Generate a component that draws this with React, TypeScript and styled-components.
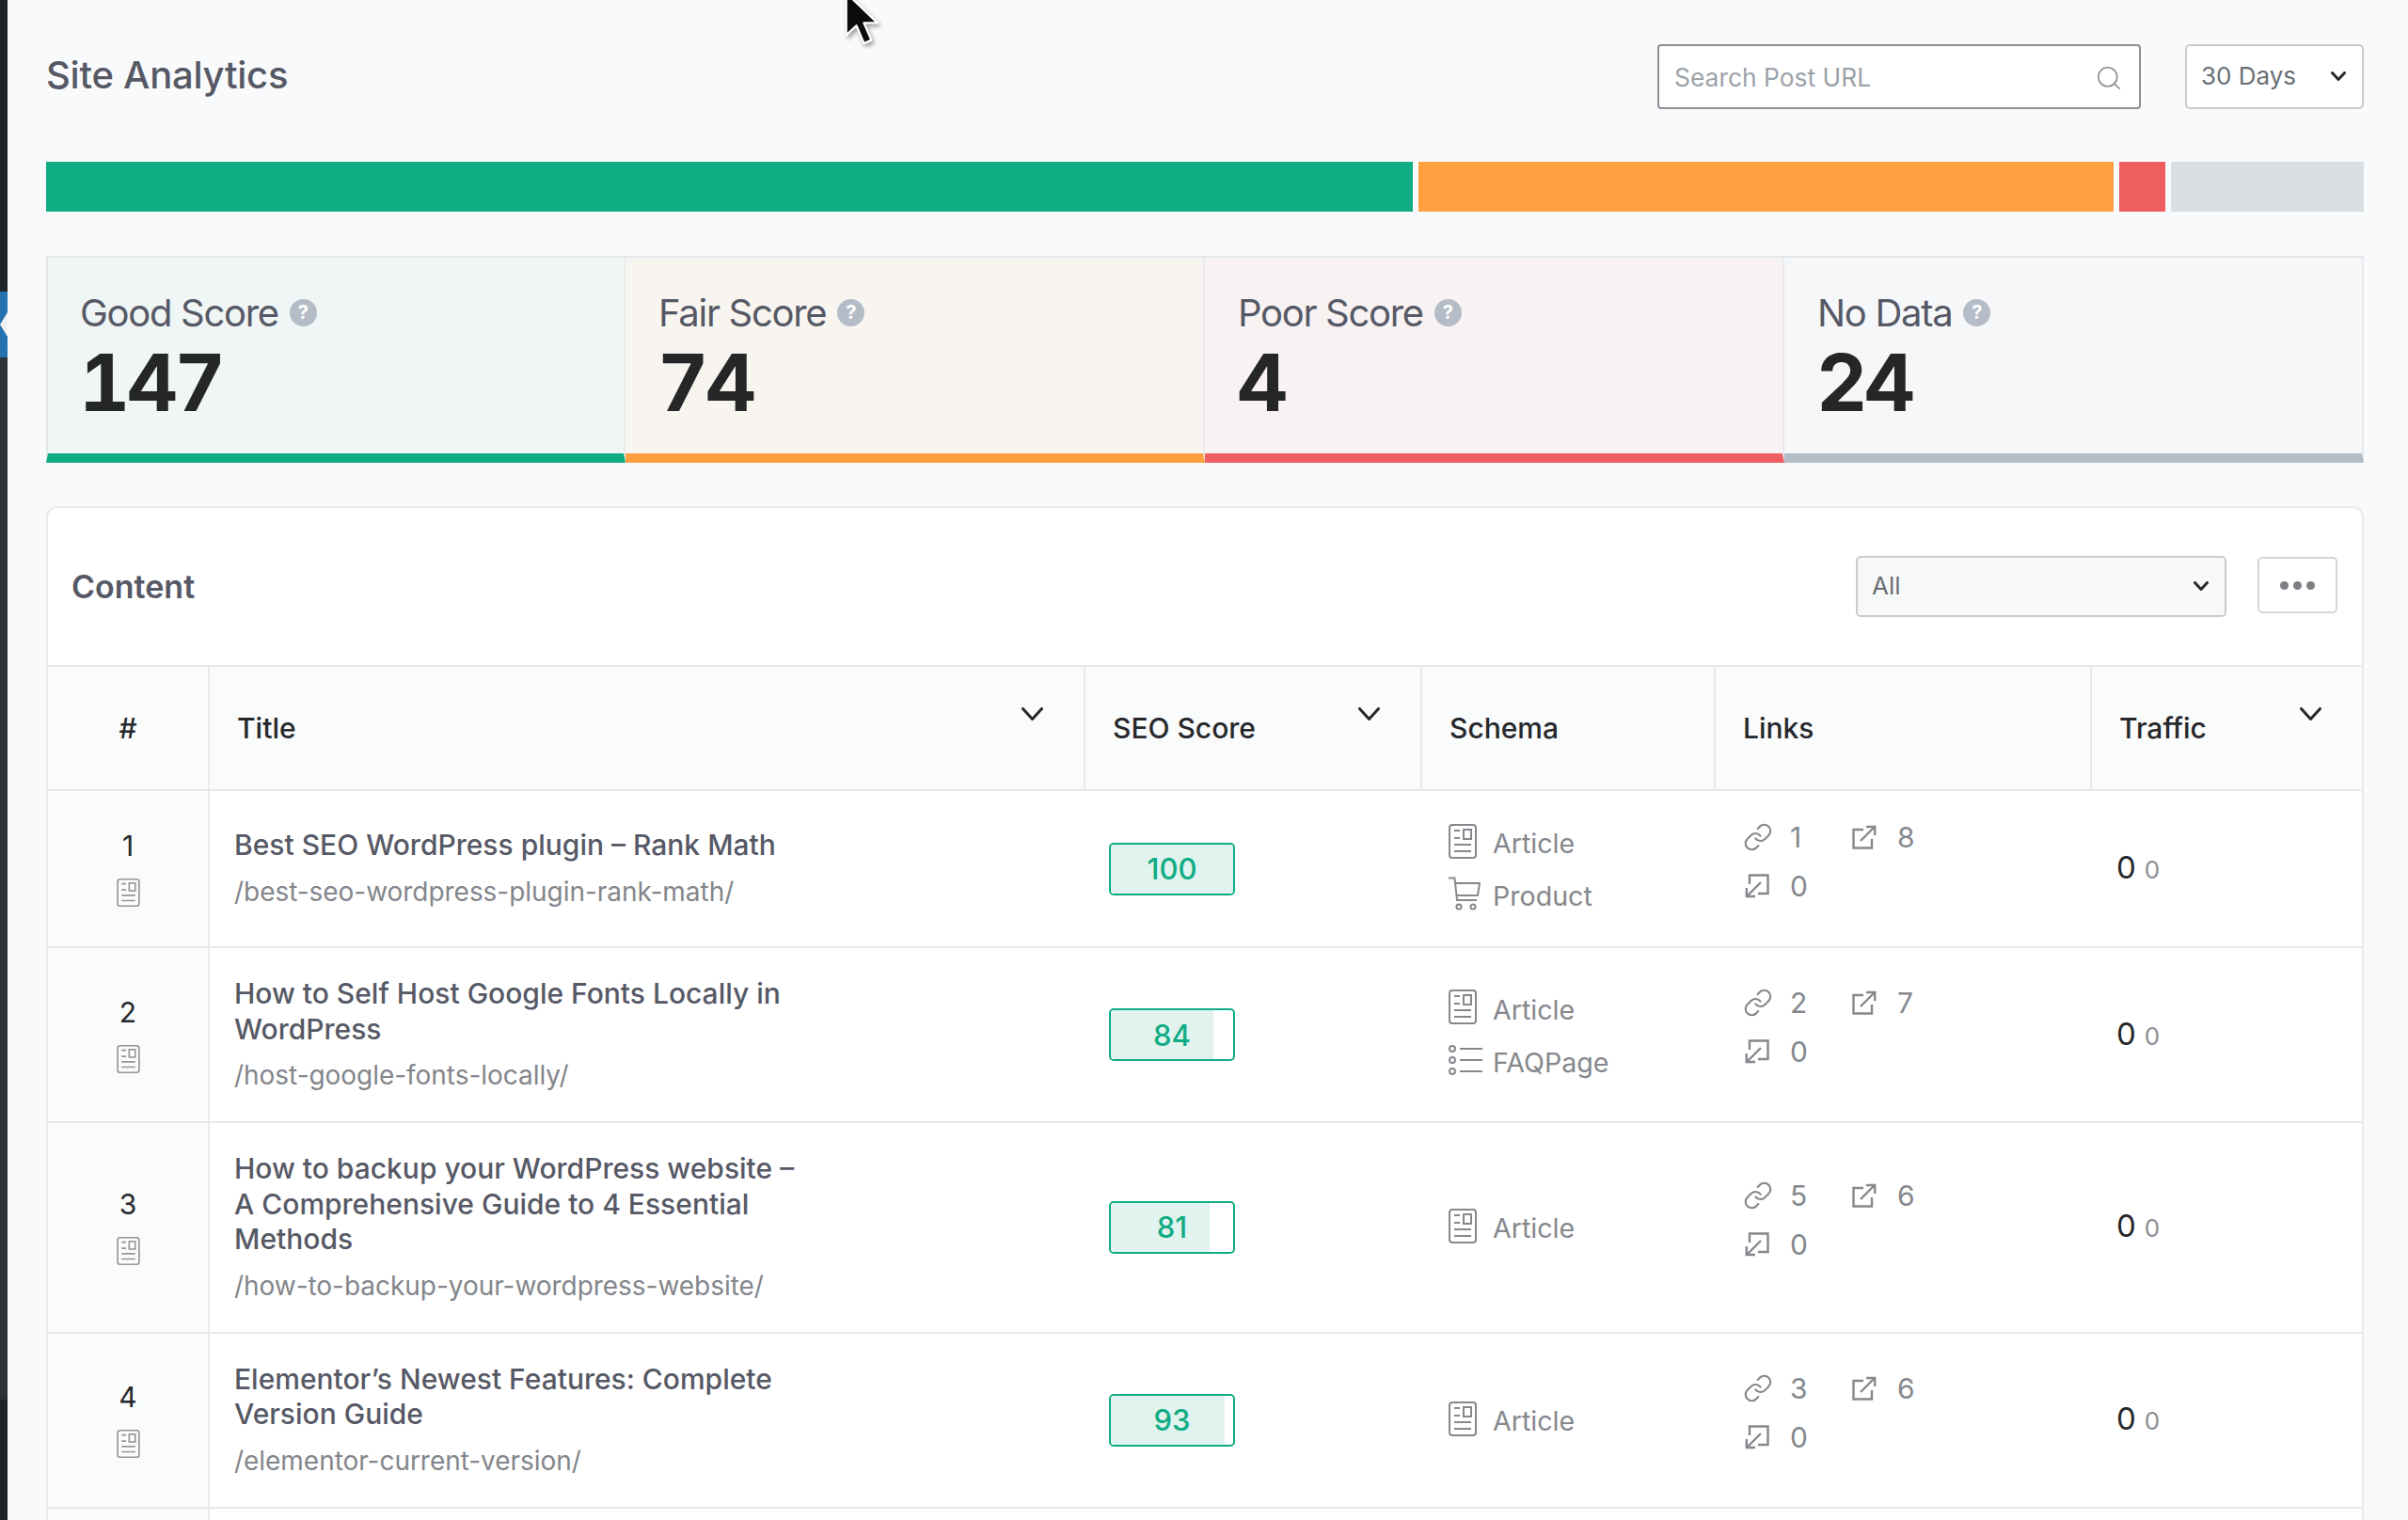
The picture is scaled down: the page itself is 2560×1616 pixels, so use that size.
import React from "react";
import styled, { createGlobalStyle } from "styled-components";
import { Link as LinkGlyph, Search } from "lucide-react";

const Global = createGlobalStyle`
  html, body { margin: 0; padding: 0; background: #f9fafb; }
  body { font-family: Inter, "Liberation Sans", sans-serif; overflow: hidden; }
  * { box-sizing: border-box; }
`;

const Shell = styled.div`
  position: relative;
  display: flex;
  width: 2560px;
  height: 1616px;
  overflow: hidden;
  background: #f9fafb;
`;
const Strip = styled.aside`
  flex: 0 0 8px;
  display: flex;
  flex-direction: column;
  background: #2c3338;
`;
const StripTop = styled.div`
  height: 310px;
  background: #1d2327;
`;
const StripNotch = styled.div`
  height: 70px;
  background: #2271b1;
  display: flex;
  align-items: center;
`;
const StripMid = styled.div`
  height: 1108px;
`;
const StripEnd = styled.div`
  flex: 1;
  background: #1d2327;
`;
const Main = styled.main`
  flex: 1;
  min-width: 0;
  padding: 47px 47px 0 41px;
`;
const Header = styled.header`
  display: flex;
  align-items: center;
  height: 69px;
  margin-bottom: 56px;
`;
const PageTitle = styled.h1`
  flex: 1;
  margin: -5px 0 0;
  font-size: 40px;
  font-weight: 500;
  color: #565965;
  letter-spacing: -0.25px;
`;
const SearchBox = styled.label`
  width: 514px;
  height: 69px;
  display: flex;
  align-items: center;
  padding: 0 17px 0 16px;
  background: #fff;
  border: 2px solid #8c8f94;
  border-radius: 4px;
  color: #8b9096;
  margin-right: 47px;
`;
const SearchInput = styled.input`
  flex: 1;
  min-width: 0;
  border: 0;
  outline: 0;
  padding: 0;
  background: transparent;
  font: 400 26.4px Inter, sans-serif;
  color: #50575e;
  &::placeholder { color: #9ba2a9; opacity: 1; }
`;
const SearchGlyph = styled.span`
  display: flex;
  margin-top: 3px;
`;
const Dropdown = styled.button<{ $w: number; $h: number; $bg: string }>`
  width: ${(p) => p.$w}px;
  height: ${(p) => p.$h}px;
  display: flex;
  align-items: center;
  justify-content: space-between;
  padding: 0 17px 2px 15px;
  background: ${(p) => p.$bg};
  border: 2px solid #c8cbcf;
  border-radius: 5px;
  font: 400 26px Inter, sans-serif;
  color: #6a6f75;
`;
const Bar = styled.div`
  display: flex;
  gap: 6px;
  height: 53px;
  margin-bottom: 47px;
`;
const BarPart = styled.div<{ $w: number; $c: string }>`
  flex: 0 0 ${(p) => p.$w}px;
  background: ${(p) => p.$c};
`;
const Cards = styled.section`
  display: grid;
  grid-template-columns: repeat(4, 1fr);
  height: 220px;
  margin-bottom: 46px;
`;
const Card = styled.div<{ $bg: string; $c: string }>`
  padding: 33px 36px 0 35px;
  background: ${(p) => p.$bg};
  border-top: 2px solid #e4e7ea;
  border-right: 2px solid #e8ebee;
  border-bottom: 10px solid ${(p) => p.$c};
  &:first-child { border-left: 2px solid #e4e7ea; padding-left: 34px; }
`;
const CardLabel = styled.div`
  display: flex;
  align-items: center;
  gap: 12px;
  height: 50px;
  font-size: 40px;
  font-weight: 400;
  color: #565965;
  letter-spacing: -1.3px;
`;
const Help = styled.span`
  width: 29px;
  height: 29px;
  border-radius: 50%;
  background: #b4bcc8;
  color: #fff;
  display: inline-flex;
  align-items: center;
  justify-content: center;
  font-size: 20px;
  font-weight: 700;
  letter-spacing: 0;
`;
const CardValue = styled.div`
  margin: 2px 0 0 -1px;
  font-size: 84px;
  line-height: 96px;
  font-weight: 700;
  font-variant-numeric: tabular-nums;
  color: #242628;
  letter-spacing: -3.5px;
`;
const Panel = styled.section`
  background: #fff;
  border: 2px solid #e8eaec;
  border-bottom: 0;
  border-radius: 12px 12px 0 0;
`;
const PanelHead = styled.div`
  display: flex;
  align-items: center;
  height: 167px;
  padding: 0 26px 0 25px;
`;
const PanelTitle = styled.h2`
  flex: 1;
  margin: -1px 0 0;
  font-size: 34px;
  font-weight: 600;
  color: #565965;
`;
const MoreButton = styled.button`
  width: 85px;
  height: 60px;
  margin: -3px 0 0 33px;
  display: flex;
  align-items: center;
  justify-content: center;
  gap: 5px;
  background: #fff;
  border: 2px solid #d3d6d9;
  border-radius: 5px;
  padding: 0;
`;
const Dot = styled.i`
  width: 9px;
  height: 9px;
  border-radius: 50%;
  background: #7c7f84;
`;
const Row = styled.div<{ $head?: boolean; $min?: number }>`
  display: grid;
  grid-template-columns: 172px 931px 358px 312px 400px 1fr;
  min-height: ${(p) => p.$min ?? 167}px;
  border-top: ${(p) => (p.$head ? "2px solid #e6e8ea" : "0")};
  border-bottom: 2px solid #e6e8ea;
  background: ${(p) => (p.$head ? "#fafbfb" : "#fff")};
`;
const HeadCell = styled.div<{ $center?: boolean }>`
  position: relative;
  display: flex;
  align-items: center;
  justify-content: ${(p) => (p.$center ? "center" : "flex-start")};
  padding: 0 ${(p) => (p.$center ? 0 : 29)}px;
  height: 130px;
  font-size: 30px;
  font-weight: 500;
  color: #26282b;
  border-right: 2px solid #e8eaec;
  &:last-child { border-right: 0; }
`;
const SortIcon = styled.span`
  position: absolute;
  right: 43px;
  top: 43px;
  display: flex;
`;
const NumCell = styled.div`
  display: flex;
  flex-direction: column;
  align-items: center;
  justify-content: center;
  gap: 16px;
  padding: 0 0 2px;
  background: #fafbfb;
  border-right: 2px solid #e8eaec;
  font-size: 30px;
  line-height: 37px;
  color: #26282b;
`;
const TitleCell = styled.div`
  display: flex;
  flex-direction: column;
  justify-content: center;
  padding: 30px 0 29.5px 26px;
`;
const PostTitle = styled.a`
  display: block;
  max-width: 620px;
  font-size: 30px;
  line-height: 37.5px;
  font-weight: 500;
  color: #565965;
`;
const PostUrl = styled.div`
  margin-top: 12px;
  font-size: 28px;
  line-height: 37.5px;
  letter-spacing: -0.04px;
  color: #83868b;
`;
const ScoreCell = styled.div`
  display: flex;
  align-items: center;
  padding-left: 25px;
`;
const ScoreBadge = styled.div`
  position: relative;
  display: flex;
  align-items: center;
  justify-content: center;
  width: 134px;
  height: 56px;
  background: #fff;
  border: 2px solid #10ac84;
  border-radius: 5px;
  overflow: hidden;
  font-size: 31px;
  font-weight: 500;
  color: #10ac84;
`;
const ScoreFill = styled.div`
  position: absolute;
  inset: 0 auto 0 0;
  background: #e1f3ee;
`;
const ScoreText = styled.span`
  position: relative;
`;
const SchemaCell = styled.div`
  display: flex;
  flex-direction: column;
  justify-content: center;
  gap: 20px;
  padding: 2px 0 0 27px;
`;
const SchemaItem = styled.div`
  display: flex;
  align-items: center;
  height: 36px;
  font-size: 28.6px;
  color: #85888c;
`;
const SchemaIcon = styled.span`
  flex: 0 0 48px;
  display: flex;
  align-items: center;
  padding-left: 1px;
  margin-bottom: 5px;
`;
const LinksCell = styled.div`
  display: grid;
  grid-template-columns: 114px 114px;
  align-content: center;
  row-gap: 20px;
  padding: 0 0 16px 29px;
`;
const LinkStat = styled.div`
  display: flex;
  align-items: center;
  height: 32px;
  font-size: 30px;
  color: #85888c;
`;
const LinkIcon = styled.span`
  flex: 0 0 50px;
  display: flex;
  align-items: center;
`;
const BoxIcon = styled(LinkIcon)`
  padding-left: 1.5px;
`;
const TrafficCell = styled.div`
  display: flex;
  align-items: baseline;
  align-self: center;
  gap: 9px;
  padding: 0 0 3px 26px;
  font-size: 33px;
  color: #26282b;
`;
const TrafficDelta = styled.span`
  font-size: 26px;
  color: #8b8e93;
`;
const CursorMark = styled.svg`
  position: absolute;
  left: 898px;
  top: -9px;
  width: 38px;
  height: 58px;
  filter: drop-shadow(2px 3px 2px rgba(0, 0, 0, 0.35));
`;

const Chevron = ({ w = 16, h = 10, sw = 3, c = "#26282b" }) => (
  <svg width={w} height={h} viewBox={`0 0 ${w} ${h}`} fill="none">
    <path d={`M1.5 1.5L${w / 2} ${h - 1.5}L${w - 1.5} 1.5`} stroke={c} strokeWidth={sw} strokeLinecap="round" strokeLinejoin="round" />
  </svg>
);

const ArticleIcon = ({ w = 30, h = 37, c = "#85888c", sw = 2 }) => (
  <svg width={w} height={h} viewBox="0 0 30 37" fill="none" stroke={c} strokeWidth={sw}>
    <rect x="1" y="1" width="28" height="35" rx="3" />
    <path d="M6 7h6M6 15h6M6 22h18M6 29h18" />
    <rect x="16" y="6" width="8" height="10" />
  </svg>
);
const CartIcon = () => (
  <svg width="34" height="36" viewBox="0 0 34 36" fill="none" stroke="#85888c" strokeWidth="2">
    <path d="M0 1.5h6.5L9 25h21" />
    <path d="M7 7h26l-2 13H8.5" />
    <circle cx="11" cy="32" r="2.6" />
    <circle cx="26" cy="32" r="2.6" />
  </svg>
);
const ListIcon = () => (
  <svg width="36" height="32" viewBox="0 0 36 32" fill="none" stroke="#85888c" strokeWidth="2">
    <circle cx="4" cy="4" r="3" />
    <circle cx="4" cy="16" r="3" />
    <circle cx="4" cy="28" r="3" />
    <path d="M12 4h24M12 16h24M12 28h24" />
  </svg>
);
const ExternalIcon = ({ flip = false }) => (
  <svg width="26" height="26" viewBox="0 0 26 26" fill="none" stroke="#85888c" strokeWidth="2.4" transform={flip ? "rotate(180)" : undefined}>
    <path d="M12 5H1.5v19.5H21V15" />
    <path d="M9 17L24 2" />
    <path d="M15 2h9.2v9" />
  </svg>
);

const cards = [
  { label: "Good Score", value: 147, bg: "#f0f5f5", c: "#10ac84" },
  { label: "Fair Score", value: 74, bg: "#f8f5f0", c: "#ff9f40" },
  { label: "Poor Score", value: 4, bg: "#f8f2f3", c: "#ee5d60" },
  { label: "No Data", value: 24, bg: "#f5f7f9", c: "#b4bcc8" },
];
const segments = [
  { w: 1453, c: "#10ac84" },
  { w: 739, c: "#ff9f40" },
  { w: 49, c: "#ee5d60" },
  { w: 205, c: "#d9dee1" },
];
const heads = [
  { t: "Title", sort: true },
  { t: "SEO Score", sort: true },
  { t: "Schema", sort: false },
  { t: "Links", sort: false },
  { t: "Traffic", sort: true },
];
const posts = [
  { n: 1, title: "Best SEO WordPress plugin – Rank Math", url: "/best-seo-wordpress-plugin-rank-math/", score: 100, schema: ["Article", "Product"], links: [1, 8, 0] },
  { n: 2, title: "How to Self Host Google Fonts Locally in WordPress", url: "/host-google-fonts-locally/", score: 84, schema: ["Article", "FAQPage"], links: [2, 7, 0] },
  { n: 3, title: "How to backup your WordPress website – A Comprehensive Guide to 4 Essential Methods", url: "/how-to-backup-your-wordpress-website/", score: 81, schema: ["Article"], links: [5, 6, 0] },
  { n: 4, title: "Elementor’s Newest Features: Complete Version Guide", url: "/elementor-current-version/", score: 93, schema: ["Article"], links: [3, 6, 0] },
];
const schemaIcon = (s: string) =>
  s === "Article" ? <ArticleIcon /> : s === "Product" ? <CartIcon /> : <ListIcon />;

export default function App() {
  return (
    <Shell>
      <Global />
      <Strip>
        <StripTop />
        <StripNotch>
          <svg width="8" height="30" viewBox="0 0 8 30"><path d="M8 2L0 15l8 13z" fill="#f0f0f1" /></svg>
        </StripNotch>
        <StripMid />
        <StripEnd />
      </Strip>
      <Main>
        <Header>
          <PageTitle>Site Analytics</PageTitle>
          <SearchBox>
            <SearchInput placeholder="Search Post URL" />
            <SearchGlyph><Search size={30} strokeWidth={1.3} /></SearchGlyph>
          </SearchBox>
          <Dropdown $w={190} $h={69} $bg="#fff">
            30 Days
            <Chevron />
          </Dropdown>
        </Header>
        <Bar>
          {segments.map((s) => (
            <BarPart key={s.c} $w={s.w} $c={s.c} />
          ))}
        </Bar>
        <Cards>
          {cards.map((c) => (
            <Card key={c.label} $bg={c.bg} $c={c.c}>
              <CardLabel>
                {c.label}
                <Help>?</Help>
              </CardLabel>
              <CardValue>{c.value}</CardValue>
            </Card>
          ))}
        </Cards>
        <Panel>
          <PanelHead>
            <PanelTitle>Content</PanelTitle>
            <Dropdown $w={394} $h={65} $bg="#f7f9f9">
              All
              <Chevron />
            </Dropdown>
            <MoreButton aria-label="More">
              <Dot />
              <Dot />
              <Dot />
            </MoreButton>
          </PanelHead>
          <Row $head $min={134}>
            <HeadCell $center>#</HeadCell>
            {heads.map((h) => (
              <HeadCell key={h.t}>
                {h.t}
                {h.sort && (
                  <SortIcon>
                    <Chevron w={23} h={14} />
                  </SortIcon>
                )}
              </HeadCell>
            ))}
          </Row>
          {posts.map((p) => (
            <Row key={p.n}>
              <NumCell>
                {p.n}
                <ArticleIcon w={25} h={30} c="#93969a" />
              </NumCell>
              <TitleCell>
                <PostTitle>{p.title}</PostTitle>
                <PostUrl>{p.url}</PostUrl>
              </TitleCell>
              <ScoreCell>
                <ScoreBadge>
                  <ScoreFill style={{ width: `${p.score}%` }} />
                  <ScoreText>{p.score}</ScoreText>
                </ScoreBadge>
              </ScoreCell>
              <SchemaCell>
                {p.schema.map((s) => (
                  <SchemaItem key={s}>
                    <SchemaIcon>{schemaIcon(s)}</SchemaIcon>
                    {s}
                  </SchemaItem>
                ))}
              </SchemaCell>
              <LinksCell>
                <LinkStat>
                  <LinkIcon><LinkGlyph size={32} strokeWidth={1.6} color="#85888c" /></LinkIcon>
                  {p.links[0]}
                </LinkStat>
                <LinkStat>
                  <BoxIcon><ExternalIcon /></BoxIcon>
                  {p.links[1]}
                </LinkStat>
                <LinkStat>
                  <BoxIcon><ExternalIcon flip /></BoxIcon>
                  {p.links[2]}
                </LinkStat>
              </LinksCell>
              <TrafficCell>
                0<TrafficDelta>0</TrafficDelta>
              </TrafficCell>
            </Row>
          ))}
          <Row>
            <NumCell />
          </Row>
        </Panel>
      </Main>
      <CursorMark viewBox="0 0 26 40">
        <path d="M1 1v31l7.5-7 5.5 13 5.5-2.4-5.5-12.6H24z" fill="#0c0c0c" stroke="#fff" strokeWidth="1.6" strokeLinejoin="round" />
      </CursorMark>
    </Shell>
  );
}
